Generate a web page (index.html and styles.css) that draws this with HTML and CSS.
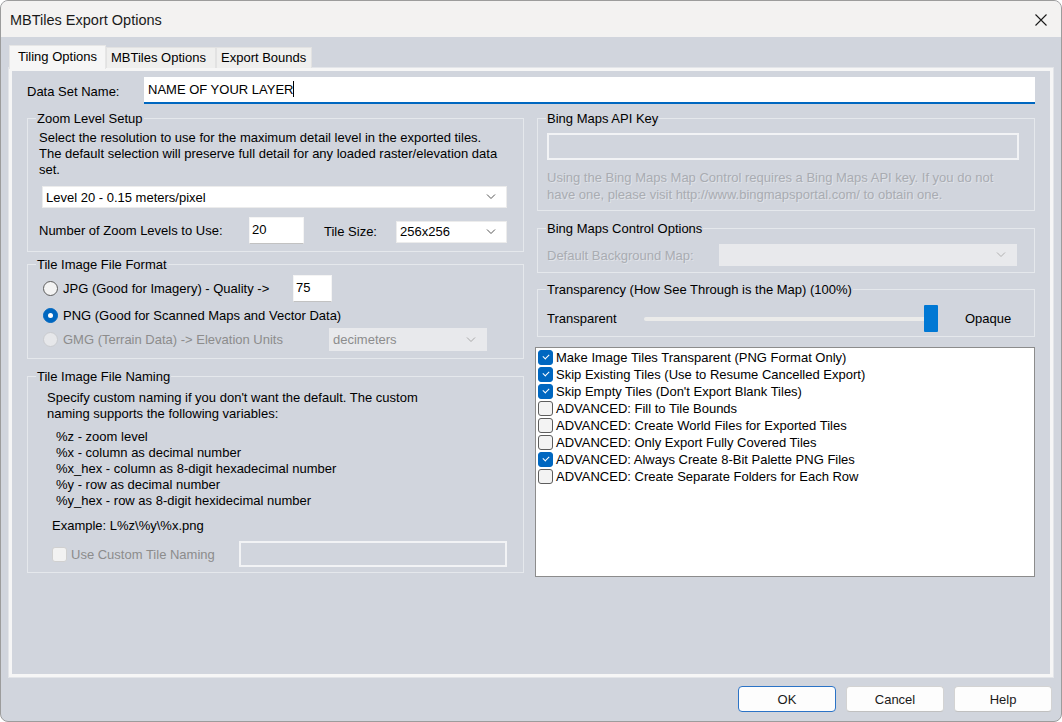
FILE: index.html
```html
<!DOCTYPE html>
<html>
<head>
<meta charset="utf-8">
<title>MBTiles Export Options</title>
<link rel="stylesheet" href="styles.css">
</head>
<body>
<div class="window">
  <div class="titlebar">
    <span class="title">MBTiles Export Options</span>
    <svg class="close" width="12" height="12" viewBox="0 0 12 12"><path d="M0.5 0.5 L11.5 11.5 M11.5 0.5 L0.5 11.5" stroke="#1a1a1a" stroke-width="1.1" fill="none"/></svg>
  </div>
  <div class="dialog">
    <div class="tabs">
      <div class="tab active">Tiling Options</div>
      <div class="tab t2">MBTiles Options</div>
      <div class="tab t3">Export Bounds</div>
    </div>
    <div class="panel">
      <div class="name-row">
        <span class="name-label">Data Set Name:</span>
        <div class="name-input">NAME OF YOUR LAYER<span class="caret"></span></div>
      </div>
      <div class="cols">
        <div class="col left">
          <div class="group g-zoom">
            <div class="group-title">Zoom Level Setup</div>
            <div class="desc">Select the resolution to use for the maximum detail level in the exported tiles.<br>The default selection will preserve full detail for any loaded raster/elevation data<br>set.</div>
            <div class="select level-select"><span>Level 20 - 0.15 meters/pixel</span><svg class="chev" width="10" height="6" viewBox="0 0 10 6"><path d="M1 0.5 L5 4.5 L9 0.5" stroke="#555" fill="none"/></svg></div>
            <div class="zoom-row">
              <span class="zl-label">Number of Zoom Levels to Use:</span>
              <div class="num-input w55">20</div>
              <span class="ts-label">Tile Size:</span>
              <div class="select ts-select"><span>256x256</span><svg class="chev" width="10" height="6" viewBox="0 0 10 6"><path d="M1 0.5 L5 4.5 L9 0.5" stroke="#555" fill="none"/></svg></div>
            </div>
          </div>
          <div class="group g-format">
            <div class="group-title">Tile Image File Format</div>
            <div class="fmt-row r1">
              <span class="radio"></span>
              <span class="fmt-label l1">JPG (Good for Imagery) - Quality -&gt;</span>
              <div class="num-input w39">75</div>
            </div>
            <div class="fmt-row r2">
              <span class="radio on"></span>
              <span class="fmt-label">PNG (Good for Scanned Maps and Vector Data)</span>
            </div>
            <div class="fmt-row r3">
              <span class="radio dis"></span>
              <span class="fmt-label l3 disabled">GMG (Terrain Data) -&gt; Elevation Units</span>
              <div class="select dis-select units"><span>decimeters</span><svg class="chev" width="10" height="6" viewBox="0 0 10 6"><path d="M1 0.5 L5 4.5 L9 0.5" stroke="#a8a8a8" fill="none"/></svg></div>
            </div>
          </div>
          <div class="group g-naming">
            <div class="group-title">Tile Image File Naming</div>
            <div class="naming-desc">Specify custom naming if you don't want the default. The custom<br>naming supports the following variables:</div>
            <div class="vars">
              <div>%z - zoom level</div>
              <div>%x - column as decimal number</div>
              <div>%x_hex - column as 8-digit hexadecimal number</div>
              <div>%y - row as decimal number</div>
              <div>%y_hex - row as 8-digit hexidecimal number</div>
            </div>
            <div class="example">Example: L%z\%y\%x.png</div>
            <div class="custom-row">
              <span class="check dis"></span>
              <span class="custom-label disabled">Use Custom Tile Naming</span>
              <div class="dis-input custom-input"></div>
            </div>
          </div>
        </div>
        <div class="col right">
          <div class="group g-api">
            <div class="group-title">Bing Maps API Key</div>
            <div class="dis-input api-input"></div>
            <div class="note">Using the Bing Maps Map Control requires a Bing Maps API key. If you do not<br>have one, please visit http://www.bingmapsportal.com/ to obtain one.</div>
          </div>
          <div class="group g-control">
            <div class="group-title">Bing Maps Control Options</div>
            <div class="ctrl-row">
              <span class="ctrl-label">Default Background Map:</span>
              <div class="select dis-select bg-select"><span></span><svg class="chev" width="10" height="6" viewBox="0 0 10 6"><path d="M1 0.5 L5 4.5 L9 0.5" stroke="#b0b0b0" fill="none"/></svg></div>
            </div>
          </div>
          <div class="group g-trans">
            <div class="group-title">Transparency (How See Through is the Map) (100%)</div>
            <div class="trans-row">
              <span class="tr-label">Transparent</span>
              <div class="slider"><div class="track"></div><div class="thumb"></div></div>
              <span class="op-label">Opaque</span>
            </div>
          </div>
          <div class="listbox">
            <div class="item"><span class="check on"></span>Make Image Tiles Transparent (PNG Format Only)</div>
            <div class="item"><span class="check on"></span>Skip Existing Tiles (Use to Resume Cancelled Export)</div>
            <div class="item"><span class="check on"></span>Skip Empty Tiles (Don't Export Blank Tiles)</div>
            <div class="item"><span class="check"></span>ADVANCED: Fill to Tile Bounds</div>
            <div class="item"><span class="check"></span>ADVANCED: Create World Files for Exported Tiles</div>
            <div class="item"><span class="check"></span>ADVANCED: Only Export Fully Covered Tiles</div>
            <div class="item"><span class="check on"></span>ADVANCED: Always Create 8-Bit Palette PNG Files</div>
            <div class="item"><span class="check"></span>ADVANCED: Create Separate Folders for Each Row</div>
          </div>
        </div>
      </div>
    </div>
    <div class="buttons">
      <div class="btn ok">OK</div>
      <div class="btn">Cancel</div>
      <div class="btn">Help</div>
    </div>
  </div>
</div>
</body>
</html>
```
FILE: styles.css
```css
* { box-sizing: border-box; }
html, body { margin: 0; padding: 0; background: #ffffff; }
body {
  width: 1062px;
  height: 722px;
  font-family: "Liberation Sans", Arial, sans-serif;
  font-size: 13px;
  color: #000;
  overflow: hidden;
}
.window {
  width: 1062px;
  height: 722px;
  border: 1px solid #9c9c9c;
  border-radius: 8px;
  overflow: hidden;
  background: #d1d5dd;
  display: flex;
  flex-direction: column;
}
.titlebar {
  height: 36px;
  flex: none;
  background: #f3f2f1;
  display: flex;
  align-items: center;
  justify-content: space-between;
  padding: 0 14px 0 9px;
}
.title {
  font-size: 14.5px;
  color: #1a1a1a;
  margin-top: 1px;
}
.close { display: block; margin-top: 1px; }
.dialog {
  flex: 1;
  padding: 8px 8px 0 8px;
  display: flex;
  flex-direction: column;
}
.tabs {
  height: 23px;
  display: flex;
  align-items: flex-end;
  position: relative;
  z-index: 1;
}
.tab {
  height: 21px;
  line-height: 20px;
  background: #efefee;
  border: 1px solid #e2e2e2;
  border-bottom: none;
  padding-left: 4px;
  color: #000;
}
.tab.active {
  height: 24px;
  margin-bottom: -1px;
  width: 97px;
  padding-left: 8px;
  line-height: 21px;
  background: #f6f6f6;
  border-color: #e6e6e6;
}
.tab.t2 { width: 110px; }
.tab.t3 { width: 96px; }
.panel {
  width: 1044px;
  height: 609px;
  border: 3px solid #f6f6f6;
  box-shadow: 0 0 0 1px #e3e5e9;
  background: #d1d5dd;
  padding: 0 14px 0 15px;
}
.name-row {
  margin-top: 6px;
  margin-right: 1px;
  height: 27px;
  display: flex;
  align-items: center;
}
.name-label {
  width: 117px;
  padding-top: 1px;
}
.name-input {
  flex: 1;
  height: 27px;
  background: #ffffff;
  border-bottom: 2px solid #0067c0;
  padding: 4px 0 0 4px;
  line-height: 15px;
  color: #000;
}
.caret {
  display: inline-block;
  width: 1px;
  height: 16px;
  background: #000;
  vertical-align: -3px;
}
.cols {
  margin-top: 14px;
  display: flex;
  gap: 13px;
}
.col { display: flex; flex-direction: column; }
.col.left { width: 497px; }
.col.right { width: 498px; }
.group {
  border: 1px solid #e5e8ec;
  flex: none;
}
.group-title {
  margin: -8px 0 0 8px;
  padding: 0 1px;
  width: fit-content;
  line-height: 15px;
  background: #d1d5dd;
  color: #000;
}
.g-zoom { height: 134px; }
.g-format { height: 95px; margin-top: 12px; }
.g-naming { height: 197px; margin-top: 17px; }
.g-api { height: 93px; }
.g-control { height: 45px; margin-top: 17px; }
.g-trans { height: 48px; margin-top: 16px; }

.desc {
  margin: 4px 0 0 11px;
  line-height: 16px;
  white-space: nowrap;
}
.select {
  background: #ffffff;
  border: 1px solid #ececec;
  display: flex;
  align-items: center;
  justify-content: space-between;
  padding: 0 10px 0 3px;
}
.chev { display: block; flex: none; }
.level-select {
  margin: 8px 0 0 14px;
  width: 465px;
  height: 22px;
}
.zoom-row {
  margin-top: 9px;
  height: 27px;
  display: flex;
  align-items: center;
}
.zl-label { margin-left: 11px; width: 210px; }
.num-input {
  height: 27px;
  background: #ffffff;
  border: 1px solid #f4f4f4;
  border-bottom-color: #c2c2c2;
  padding: 4px 0 0 2px;
  line-height: 15px;
  align-self: flex-start;
}
.w55 { width: 55px; }
.w39 { width: 39px; }
.ts-label { margin-left: 20px; width: 72px; padding-top: 2px; }
.ts-select { width: 111px; height: 22px; margin-top: 2px; }

.fmt-row { display: flex; align-items: center; padding-left: 15px; }
.fmt-row.r1 { margin-top: 3px; height: 27px; }
.fmt-row.r2 { height: 26px; }
.fmt-row.r3 { height: 23px; }
.radio {
  width: 15px;
  height: 15px;
  border-radius: 50%;
  border: 1px solid #5d5d5d;
  background: #f3f3f3;
  flex: none;
  margin-right: 5px;
  position: relative;
}
.radio.on {
  background: #0067c0;
  border-color: #0067c0;
}
.radio.on::after {
  content: "";
  position: absolute;
  left: 4px;
  top: 4px;
  width: 5px;
  height: 5px;
  border-radius: 50%;
  background: #ffffff;
}
.radio.dis { background: #e6e7ea; border-color: #c9cbcf; }
.fmt-label.l1 { width: 230px; }
.fmt-label.l3 { width: 266px; }
.disabled { color: #8c8c8c; }
.dis-select {
  background: #e8e9ec;
  border-color: #e8e9ec;
  color: #8c8c8c;
}
.units { width: 158px; height: 23px; }

.naming-desc { margin: 6px 0 0 19px; line-height: 16px; white-space: nowrap; }
.vars { margin: 7px 0 0 28px; line-height: 16px; }
.example { margin: 9px 0 0 24px; line-height: 16px; }
.custom-row { margin-top: 7px; height: 26px; display: flex; align-items: center; }
.custom-row .check { margin-left: 24px; }
.custom-label { width: 168px; }
.dis-input {
  border: 2px solid #f2f3f5;
  background: transparent;
}
.custom-input { width: 268px; height: 26px; }

.check {
  width: 15px;
  height: 15px;
  border-radius: 3px;
  border: 1px solid #5d5d5d;
  background: #f3f3f3;
  flex: none;
  margin-right: 4px;
  position: relative;
}
.check.on {
  background: #0067c0;
  border-color: #0067c0;
}
.check.on::after {
  content: "";
  position: absolute;
  left: 4px;
  top: 3px;
  width: 5px;
  height: 3px;
  border-left: 1.2px solid #fff;
  border-bottom: 1.2px solid #fff;
  transform: rotate(-45deg);
}
.check.dis { background: #f2f2f2; border-color: #d0d0d0; }

.api-input { margin: 7px 0 0 9px; width: 472px; height: 27px; }
.note {
  margin: 9px 0 0 9px;
  line-height: 17px;
  color: #a9acb2;
  text-shadow: 1px 1px 0 rgba(255,255,255,0.35);
  white-space: nowrap;
}
.ctrl-row { margin-top: 8px; height: 22px; display: flex; align-items: center; }
.ctrl-label {
  margin-left: 9px;
  width: 172px;
  color: #a9acb2;
  text-shadow: 1px 1px 0 rgba(255,255,255,0.35);
}
.bg-select { width: 298px; height: 22px; }

.trans-row { margin-top: 8px; height: 27px; display: flex; align-items: center; }
.tr-label { margin-left: 9px; width: 97px; }
.slider {
  width: 294px;
  height: 27px;
  display: flex;
  align-items: center;
  position: relative;
}
.track {
  flex: 1;
  height: 4px;
  background: #ebebea;
  border-radius: 2px;
}
.thumb {
  position: absolute;
  right: 0;
  top: 0;
  width: 14px;
  height: 27px;
  background: #0078d4;
  border-radius: 1px;
}
.op-label { margin-left: 27px; }

.listbox {
  margin: 10px 0 0 -2px;
  width: 500px;
  height: 230px;
  border: 1px solid #8c8c8c;
  background: #ffffff;
  padding: 1px 2px;
}
.item {
  height: 17px;
  display: flex;
  align-items: center;
  line-height: 17px;
  white-space: nowrap;
}
.item .check { margin-right: 3px; }

.buttons {
  margin-top: 9px;
  display: flex;
  justify-content: flex-end;
  gap: 10px;
  padding-right: 1px;
}
.btn {
  width: 98px;
  height: 26px;
  background: #fdfdfd;
  border: 1px solid #d3d3d3;
  border-bottom-color: #c0c0c0;
  border-radius: 4px;
  display: flex;
  align-items: center;
  justify-content: center;
  color: #1a1a1a;
}
.btn.ok { border-color: #2b73c6; }
```
